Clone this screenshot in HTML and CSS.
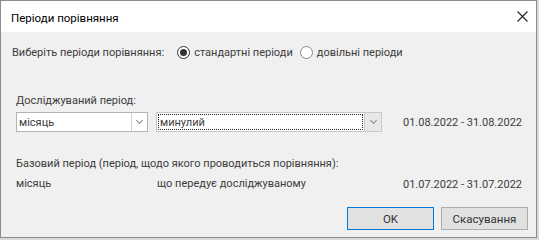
FILE: index.html
```html
<!DOCTYPE html>
<html lang="uk">
<head>
    <meta charset="UTF-8">
    <title>Періоди порівняння</title>
    <link rel="stylesheet" href="styles.css">
</head>
<body>

    <div class="dialog">
        <div class="title-bar">
            <span class="title">Періоди порівняння</span>
            <span class="close-btn">
                <svg width="11" height="11" viewBox="0 0 11 11">
                    <path d="M0.5 0.5 L10.5 10.5 M10.5 0.5 L0.5 10.5" stroke="#222" stroke-width="1.1" fill="none"/>
                </svg>
            </span>
        </div>

        <div class="dialog-body">
            <!-- Period type choice -->
            <div class="mode-row">
                <span>Виберіть періоди порівняння:</span>
                <label class="radio checked"><span class="radio-circle"></span>стандартні періоди</label>
                <label class="radio"><span class="radio-circle"></span>довільні періоди</label>
            </div>

            <!-- Study period -->
            <div class="section-label study-label">Досліджуваний період:</div>
            <div class="period-grid">
                <div class="combo">
                    <span class="combo-text">місяць</span>
                    <span class="combo-arrow"><span class="chevron"></span></span>
                </div>
                <div class="combo combo-focus">
                    <span class="combo-text"><span class="focus-rect">минулий</span></span>
                    <span class="combo-arrow"><span class="chevron"></span></span>
                </div>
                <div class="date-range">01.08.2022 - 31.08.2022</div>
            </div>

            <!-- Base period -->
            <div class="section-label base-label">Базовий період (період, щодо якого проводиться порівняння):</div>
            <div class="period-grid base-row">
                <div class="plain">місяць</div>
                <div class="plain">що передує досліджуваному</div>
                <div class="date-range">01.07.2022 - 31.07.2022</div>
            </div>

            <div class="buttons">
                <button class="btn btn-default">OK</button>
                <button class="btn">Скасування</button>
            </div>
        </div>
    </div>

</body>
</html>
```

FILE: styles.css
```css
:root {
    --dialog-bg: #f0f0f0;
    --text-color: #3c3c3c;
    --border-gray: #adadad;
    --accent-blue: #0078d7;
}

html, body {
    margin: 0;
    padding: 0;
    width: 100%;
    height: 100%;
    overflow: hidden;
    background: #d9d9d9;
    font-family: Roboto, "Noto Sans", Arial, sans-serif;
    font-size: 11px;
}

/* Window frame */
.dialog {
    width: 535px;
    height: 236px;
    border: 1px solid #8c8c8c;
    background: var(--dialog-bg);
    display: flex;
    flex-direction: column;
}

.title-bar {
    height: 31px;
    flex: none;
    background: white;
    display: flex;
    align-items: center;
    justify-content: space-between;
    padding: 0 8px 0 10px;
}

.title {
    color: #000;
    font-size: 11.5px;
    padding-top: 2px;
}

.close-btn {
    display: flex;
    align-items: center;
}

/* Dialog content */
.dialog-body {
    flex: 1;
    padding: 10px 14px 0 15px;
    color: var(--text-color);
    display: flex;
    flex-direction: column;
    white-space: nowrap;
}

.mode-row {
    height: 20px;
    display: flex;
    align-items: center;
    margin-left: -4px;
}

.radio {
    display: flex;
    align-items: center;
    gap: 4px;
    margin-left: 13px;
}

.radio + .radio {
    margin-left: 7px;
}

.radio-circle {
    width: 11px;
    height: 11px;
    border: 1px solid #8a8a8a;
    border-radius: 50%;
    background: white;
    display: flex;
    align-items: center;
    justify-content: center;
}

.radio.checked .radio-circle {
    border-color: #333;
}

.radio.checked .radio-circle::after {
    content: "";
    width: 7px;
    height: 7px;
    border-radius: 50%;
    background: #333;
}

.section-label {
    height: 16px;
    line-height: 16px;
}

.study-label {
    margin-top: 31px;
}

.base-label {
    margin-top: 24px;
}

.period-grid {
    display: grid;
    grid-template-columns: 132px 226px 1fr;
    column-gap: 8px;
    align-items: center;
    margin-top: 3px;
}

.base-row {
    margin-top: 4px;
    height: 16px;
}

/* Combo boxes */
.combo {
    height: 20px;
    box-sizing: border-box;
    border: 1px solid #b4b4b4;
    background: white;
    display: flex;
}

.combo-text {
    flex: 1;
    display: flex;
    align-items: center;
    padding-left: 2px;
}

.combo-arrow {
    width: 15px;
    border-left: 1px solid #d0d0d0;
    display: flex;
    align-items: center;
    justify-content: center;
}

.combo-focus {
    border-color: #c8c8c8;
}

.combo-focus .combo-text {
    padding: 1px;
}

.focus-rect {
    flex: 1;
    align-self: stretch;
    display: flex;
    align-items: center;
    padding-left: 1px;
    border: 1px dotted #222;
}

.combo-focus .combo-arrow {
    width: 16px;
    background: #e8e8e8;
    border-left: 1px solid #c8c8c8;
}

.chevron {
    width: 4px;
    height: 4px;
    border-right: 1.5px solid #8a8a8a;
    border-bottom: 1.5px solid #8a8a8a;
    transform: rotate(45deg);
    margin-top: -3px;
}

.plain {
    line-height: 16px;
}

.plain + .plain {
    padding-left: 1px;
}

.date-range {
    text-align: right;
}

/* Buttons */
.buttons {
    display: flex;
    justify-content: flex-end;
    gap: 7px;
    margin-top: 15px;
    margin-right: -6px;
}

.btn {
    width: 87px;
    height: 23px;
    box-sizing: border-box;
    background: #e1e1e1;
    border: 1px solid var(--border-gray);
    font-family: inherit;
    font-size: 11.5px;
    color: #333;
    padding: 0;
}

.btn-default {
    border-color: var(--accent-blue);
}
```
